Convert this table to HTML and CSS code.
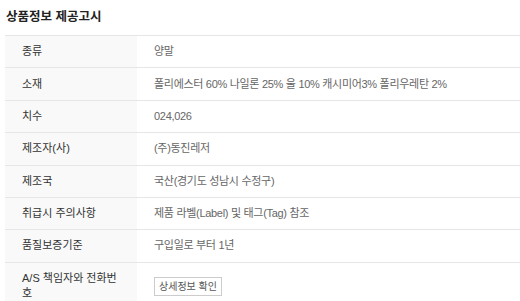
FILE: index.html
```html
<!DOCTYPE html>
<html lang="ko">
<head>
<meta charset="utf-8">
<link rel="stylesheet" href="styles.css">
</head>
<body>
<div class="notice">
  <h2 class="title">상품정보 제공고시</h2>
  <div class="table">
    <div class="row"><div class="th">종류</div><div class="td">양말</div></div>
    <div class="row"><div class="th">소재</div><div class="td">폴리에스터 60% 나일론 25% 울 10% 캐시미어3% 폴리우레탄 2%</div></div>
    <div class="row"><div class="th">치수</div><div class="td">024,026</div></div>
    <div class="row"><div class="th">제조자(사)</div><div class="td">(주)동진레저</div></div>
    <div class="row"><div class="th">제조국</div><div class="td">국산(경기도 성남시 수정구)</div></div>
    <div class="row"><div class="th">취급시 주의사항</div><div class="td">제품 라벨(Label) 및 태그(Tag) 참조</div></div>
    <div class="row"><div class="th">품질보증기준</div><div class="td">구입일로 부터 1년</div></div>
    <div class="row"><div class="th">A/S 책임자와 전화번호</div><div class="td"><button class="btn" type="button">상세정보 확인</button></div></div>
  </div>
</div>
</body>
</html>
```
FILE: styles.css
```css
html, body {
  margin: 0;
  padding: 0;
  background: #fff;
}
body {
  font-family: "Liberation Sans", "Noto Sans CJK KR", sans-serif;
  font-size: 11px;
  color: #333;
}
.notice {
  padding: 0 0 0 5px;
}
.title {
  margin: 0;
  padding: 9px 0 0 1px;
  height: 35px;
  box-sizing: border-box;
  font-size: 12.5px;
  line-height: 17px;
  font-weight: bold;
  color: #222;
}
.table {
  border-top: 1px solid #e6e6e6;
}
.row {
  display: grid;
  grid-template-columns: 132px 1fr;
  border-bottom: 1px solid #e6e6e6;
}
.th {
  background: #f9f9f9;
  padding: 8.2px 17px 8.2px 17px;
  line-height: 15px;
  color: #333;
  word-break: break-all;
}
.td {
  padding: 8.2px 17px;
  line-height: 15px;
  color: #666;
  letter-spacing: -0.3px;
}
.btn {
  font-family: inherit;
  font-size: 10px;
  line-height: 15px;
  color: #555;
  background: #fff;
  border: 1px solid #ccc;
  padding: 1px 4px;
  margin: 6px 0 0 0;
  border-radius: 0;
  letter-spacing: 0;
}
```
